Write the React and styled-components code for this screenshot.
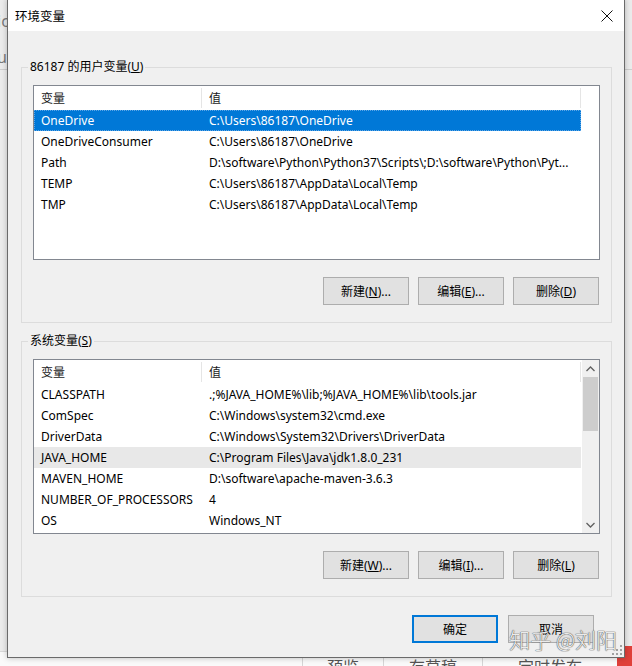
import React from 'react'
import styled, { createGlobalStyle } from 'styled-components'

const GlobalStyle = createGlobalStyle`
  html, body {
    margin: 0;
    padding: 0;
  }
  body {
    font-family: "Noto Sans", "Noto Sans CJK SC", sans-serif;
    font-size: 12px;
    color: #000;
  }
`

const userVars = [
  ['OneDrive', 'C:\\Users\\86187\\OneDrive'],
  ['OneDriveConsumer', 'C:\\Users\\86187\\OneDrive'],
  ['Path', 'D:\\software\\Python\\Python37\\Scripts\\;D:\\software\\Python\\Pyt...'],
  ['TEMP', 'C:\\Users\\86187\\AppData\\Local\\Temp'],
  ['TMP', 'C:\\Users\\86187\\AppData\\Local\\Temp'],
]

const systemVars = [
  ['CLASSPATH', '.;%JAVA_HOME%\\lib;%JAVA_HOME%\\lib\\tools.jar'],
  ['ComSpec', 'C:\\Windows\\system32\\cmd.exe'],
  ['DriverData', 'C:\\Windows\\System32\\Drivers\\DriverData'],
  ['JAVA_HOME', 'C:\\Program Files\\Java\\jdk1.8.0_231'],
  ['MAVEN_HOME', 'D:\\software\\apache-maven-3.6.3'],
  ['NUMBER_OF_PROCESSORS', '4'],
  ['OS', 'Windows_NT'],
]

const Chevron = ({ up }) => (
  <svg width="9" height="6" viewBox="0 0 9 6">
    <polyline
      points={up ? '0.5,5 4.5,1 8.5,5' : '0.5,1 4.5,5 8.5,1'}
      fill="none"
      stroke="#606060"
      strokeWidth="1.3"
    />
  </svg>
)

const VarList = ({ rows, selected, hover, scroll }) => (
  <ListBox>
    <ListMain>
      <HeaderRow>
        <HeaderCell>变量</HeaderCell>
        <HeaderCell>值</HeaderCell>
      </HeaderRow>
      {rows.map(([name, value], i) => (
        <Row key={name} $selected={i === selected} $hover={i === hover}>
          <Cell>{name}</Cell>
          <Cell>{value}</Cell>
        </Row>
      ))}
    </ListMain>
    {scroll && (
      <ScrollBar>
        <ScrollArrow><Chevron up /></ScrollArrow>
        <ScrollTrack>
          <ScrollThumb />
        </ScrollTrack>
        <ScrollArrow><Chevron /></ScrollArrow>
      </ScrollBar>
    )}
  </ListBox>
)

const App = () => {
  return (
    <>
      <GlobalStyle />
      <Desktop>
        <BackHeader>
          <BackText>ic</BackText>
          <BackText>u</BackText>
        </BackHeader>
        <BackBar>
          <BackSpacer />
          <BackItem $w={80}>预览</BackItem>
          <BackItem $w={98}>存草稿</BackItem>
          <BackItem $w={134}>定时发布</BackItem>
          <BackRed />
        </BackBar>

        <Dialog>
          <TitleBar>
            <Title>环境变量</Title>
            <CloseButton>
              <svg width="12" height="12" viewBox="0 0 12 12">
                <path d="M0.5 0.5 L11.5 11.5 M11.5 0.5 L0.5 11.5" stroke="#111" strokeWidth="1" />
              </svg>
            </CloseButton>
          </TitleBar>

          <Body>
            <Group>
              <Legend>86187 的用户变量(<u>U</u>)</Legend>
              <VarList rows={userVars} selected={0} />
              <ButtonRow>
                <Button>新建(<u>N</u>)...</Button>
                <Button>编辑(<u>E</u>)...</Button>
                <Button>删除(<u>D</u>)</Button>
              </ButtonRow>
            </Group>

            <Group $gap>
              <Legend>系统变量(<u>S</u>)</Legend>
              <VarList rows={systemVars} hover={3} scroll />
              <ButtonRow>
                <Button>新建(<u>W</u>)...</Button>
                <Button>编辑(<u>I</u>)...</Button>
                <Button>删除(<u>L</u>)</Button>
              </ButtonRow>
            </Group>

            <Footer>
              <Button $primary>确定</Button>
              <Button>取消</Button>
            </Footer>
          </Body>

          <Grip>
            <svg width="10" height="10" viewBox="0 0 10 10" fill="#a0a0a0">
              <rect x="8" y="0" width="2" height="2" />
              <rect x="4" y="4" width="2" height="2" />
              <rect x="8" y="4" width="2" height="2" />
              <rect x="0" y="8" width="2" height="2" />
              <rect x="4" y="8" width="2" height="2" />
              <rect x="8" y="8" width="2" height="2" />
            </svg>
          </Grip>
          <Watermark>知乎 @刘阳</Watermark>
        </Dialog>
      </Desktop>
    </>
  )
}

const Desktop = styled.div`
  position: relative;
  width: 632px;
  height: 666px;
  overflow: hidden;
  background: #ececec;
  display: flex;
  flex-direction: column;
  justify-content: space-between;
`
const BackHeader = styled.div`
  height: 70px;
  border-bottom: 1px solid #cfcfcf;
  display: flex;
  flex-direction: column;
  gap: 14px;
  padding-top: 10px;
  box-sizing: border-box;
  margin-left: -3px;
`
const BackText = styled.span`
  font-size: 16px;
  color: #7a7a7a;
`
const BackBar = styled.div`
  display: flex;
  align-items: flex-end;
  height: 28px;
  margin-bottom: -14px;
  background: #fafafa;
  border-top: 1px solid #dadada;
`
const BackSpacer = styled.div`
  flex: 1;
  height: 100%;
`
const BackItem = styled.div`
  width: ${p => p.$w}px;
  height: 100%;
  border-left: 1px solid #d6d6d6;
  display: flex;
  align-items: center;
  justify-content: center;
  font-size: 16px;
  color: #555;
`
const BackRed = styled.div`
  width: 15px;
  height: 34px;
  background: #e0403a;
`

const Dialog = styled.div`
  position: absolute;
  left: 7px;
  top: -1px;
  width: 618px;
  height: 659px;
  box-sizing: border-box;
  border: 1px solid #6a6a6a;
  background: #f0f0f0;
  box-shadow: 0 0 6px rgba(0, 0, 0, 0.25);
  display: flex;
  flex-direction: column;
`
const TitleBar = styled.div`
  height: 31px;
  background: #fff;
  display: flex;
  align-items: center;
  justify-content: space-between;
  padding-left: 7px;
  flex-shrink: 0;
`
const Title = styled.span`
  font-size: 12.5px;
`
const CloseButton = styled.div`
  width: 34px;
  height: 31px;
  display: flex;
  align-items: center;
  justify-content: center;
`
const Body = styled.div`
  display: flex;
  flex-direction: column;
  padding: 28px 12px 0 13px;
`
const Group = styled.fieldset`
  margin: ${p => (p.$gap ? '10px' : '0')} 0 0 0;
  padding: 0 11px 17px 11px;
  border: 1px solid #dcdcdc;
  min-width: 0;
`
const Legend = styled.legend`
  padding: 0 2px;
  margin-left: -5px;
  line-height: 16px;
  font-size: 12px;
`
const ListBox = styled.div`
  margin-top: 10px;
  height: 175px;
  box-sizing: border-box;
  border: 1px solid #828790;
  background: #fff;
  display: flex;
  overflow: hidden;
`
const ListMain = styled.div`
  width: 547px;
  display: flex;
  flex-direction: column;
`
const HeaderRow = styled.div`
  display: grid;
  grid-template-columns: 168px 379px;
  height: 24px;
`
const HeaderCell = styled.div`
  display: flex;
  align-items: center;
  padding-left: 7px;
  border-right: 1px solid #e5e5e5;
  margin: 2px 0;
  color: #1a1a1a;
`
const Row = styled.div`
  display: grid;
  grid-template-columns: 168px 379px;
  height: 21px;
  box-sizing: border-box;
  background: ${p => (p.$selected ? '#0078d7' : p.$hover ? '#e8e8e8' : 'transparent')};
  color: ${p => (p.$selected ? '#fff' : '#000')};
  border: 1px dotted ${p => (p.$selected ? '#5ea6e6' : 'transparent')};
`
const Cell = styled.div`
  display: flex;
  align-items: center;
  padding-left: 6px;
  white-space: nowrap;
  overflow: hidden;
`
const ScrollBar = styled.div`
  width: 17px;
  margin-left: auto;
  background: #f0f0f0;
  display: flex;
  flex-direction: column;
`
const ScrollArrow = styled.div`
  height: 17px;
  display: flex;
  align-items: center;
  justify-content: center;
  flex-shrink: 0;
`
const ScrollTrack = styled.div`
  flex: 1;
  padding: 0 1px;
`
const ScrollThumb = styled.div`
  height: 54px;
  background: #cdcdcd;
`
const ButtonRow = styled.div`
  display: flex;
  justify-content: flex-end;
  gap: 9px;
  margin-top: 17px;
  padding-right: 1px;
`
const Button = styled.div`
  width: 86px;
  height: 28px;
  box-sizing: border-box;
  display: flex;
  align-items: center;
  justify-content: center;
  background: #e1e1e1;
  border: ${p => (p.$primary ? '2px solid #0078d7' : '1px solid #adadad')};
  font-size: 12px;
  color: #000;
`
const Footer = styled.div`
  display: flex;
  justify-content: flex-end;
  gap: 10px;
  margin-top: 18px;
  padding-right: 18px;
`
const Grip = styled.div`
  position: absolute;
  right: 2px;
  bottom: 2px;
  display: flex;
`
const Watermark = styled.div`
  position: absolute;
  right: 7px;
  bottom: 3px;
  font-size: 21px;
  color: rgba(255, 255, 255, 0.9);
  text-shadow: 0 0 1px #666, 0 0 1px #666, 0 0 1px #666;
  font-family: "Noto Sans CJK SC", sans-serif;
  font-weight: 300;
`

export default App
